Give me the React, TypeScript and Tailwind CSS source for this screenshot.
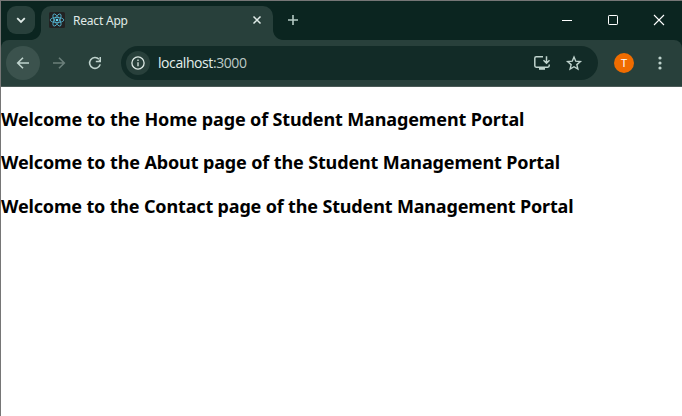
import type { ReactNode } from "react";

function Icon({ size = 16, box = "0 0 16 16", children, className = "" }: { size?: number; box?: string; children: ReactNode; className?: string }) {
  return (
    <svg width={size} height={size} viewBox={box} fill="none" stroke="currentColor" className={`shrink-0 ${className}`}>
      {children}
    </svg>
  );
}

function ReactLogo() {
  return (
    <svg width="16" height="16" viewBox="0 0 16 16" className="shrink-0">
      <rect width="16" height="16" rx="1.5" fill="#222222" />
      <g fill="none" stroke="#53b4cf" strokeWidth="0.85">
        <ellipse cx="8" cy="8" rx="6.8" ry="2.6" />
        <ellipse cx="8" cy="8" rx="6.8" ry="2.6" transform="rotate(60 8 8)" />
        <ellipse cx="8" cy="8" rx="6.8" ry="2.6" transform="rotate(120 8 8)" />
      </g>
      <circle cx="8" cy="8" r="1.3" fill="#61dafb" />
    </svg>
  );
}

function TabStrip() {
  return (
    <div className="flex h-[39px] w-full text-[#e0ebe8]">
      <div className="ml-1.5 mt-[5px] flex size-7 items-center justify-center rounded-[9px] bg-[#28403b]">
        <Icon><path d="M4.2 6.2 8 10l3.8-3.8" strokeWidth="1.8" /></Icon>
      </div>
      <div className="ml-[-4px] h-2.5 w-2.5 shrink-0 self-end bg-[radial-gradient(circle_at_0_0,transparent_9.5px,#28403b_10.3px)]" />
      <div className="mt-[5px] flex h-[34px] w-[232px] shrink-0 items-center rounded-t-[10px] bg-[#28403b] pb-[6px] pl-2">
        <ReactLogo />
        <span className="ml-2 mt-px whitespace-nowrap font-['Noto_Sans',sans-serif] text-[12px] leading-4 tracking-[-0.2px]">React App</span>
        <Icon className="ml-auto mr-2"><path d="m4.5 4.5 7 7M11.5 4.5l-7 7" strokeWidth="1.5" /></Icon>
      </div>
      <div className="h-2.5 w-2.5 shrink-0 self-end bg-[radial-gradient(circle_at_100%_0,transparent_9.5px,#28403b_10.3px)]" />
      <Icon className="ml-[2px] mt-[11px] text-[#b5cac4]"><path d="M8 3v10M3 8h10" strokeWidth="1.6" /></Icon>
      <div className="ml-auto flex h-[38px] text-white">
        <div className="flex w-[46px] items-center justify-center"><Icon><path d="M3 8.5h10" /></Icon></div>
        <div className="flex w-[46px] items-center justify-center"><Icon><rect x="3.5" y="3.5" width="9" height="9" rx="0.7" /></Icon></div>
        <div className="flex w-[46px] items-center justify-center"><Icon><path d="m3 3 10 10M13 3 3 13" strokeWidth="1.1" /></Icon></div>
      </div>
    </div>
  );
}

function Toolbar() {
  return (
    <div className="flex h-[47px] items-center rounded-t-[8px] border-b border-[#4b5a57] bg-[#28403b] pl-[5px] text-[#bfd3cd]">
      <div className="flex size-[34px] items-center justify-center rounded-full bg-[#3b524d]">
        <Icon><path d="M14 8H3M8 2.7 2.7 8 8 13.3" strokeWidth="1.6" /></Icon>
      </div>
      <Icon className="ml-[11px] text-[#6b7f7a]"><path d="M2 8h11M8 2.7 13.3 8 8 13.3" strokeWidth="1.6" /></Icon>
      <Icon className="ml-5">
        <path d="M13.2 9.4A5.4 5.4 0 1 1 12 4.3" strokeWidth="1.6" />
        <path d="M14 2v5.2H8.8V5.8h2.7l1-1V2z" fill="currentColor" stroke="none" />
      </Icon>
      <div className="ml-[18px] flex h-[34px] w-[477px] shrink-0 items-center rounded-full bg-[#122b27] pl-[5px] pr-[15px]">
        <div className="flex size-6 items-center justify-center rounded-full bg-[#28403b] text-[#dce8e4]">
          <Icon>
            <circle cx="8" cy="8" r="6.1" strokeWidth="1.3" />
            <path d="M8 7.2v4M8 4.6v1.5" strokeWidth="1.3" />
          </Icon>
        </div>
        <span className="ml-2 whitespace-nowrap font-['Open_Sans',sans-serif] text-[14px] leading-5 tracking-[-0.42px] text-[#e3efeb]">
          localhost<span className="text-[#bdc9c5]">:3000</span>
        </span>
        <Icon size={18} box="0 0 18 18" className="ml-auto">
          <path d="M10 2.8H3.2Q1.8 2.8 1.8 4.2v7.6Q1.8 13.2 3.2 13.2h11.6q1.4 0 1.4-1.4V10.5M13.5 2.2v6.6M10.5 6.2l3 3 3-3" strokeWidth="1.5" />
          <path d="M6 13.5h6v2.3H6z" fill="currentColor" stroke="none" />
        </Icon>
        <Icon size={18} box="0 0 18 18" className="ml-[14px]">
          <path d="m9 3 1.75 4.2 4.6.4-3.5 3 1.05 4.5L9 12.7l-3.9 2.4 1.05-4.5-3.5-3 4.6-.4z" strokeWidth="1.4" />
        </Icon>
      </div>
      <div className="ml-4 flex size-5 shrink-0 items-center justify-center rounded-full bg-[#f06c00] font-['Roboto',sans-serif] text-[11px] leading-none text-white">T</div>
      <Icon className="ml-[18px]">
        <g fill="currentColor" stroke="none"><circle cx="8" cy="3" r="1.6" /><circle cx="8" cy="8" r="1.6" /><circle cx="8" cy="13" r="1.6" /></g>
      </Icon>
    </div>
  );
}

export default function App() {
  return (
    <div className="h-[416px] w-[682px] overflow-hidden border-l border-t border-[#767676] bg-white">
      <div className="bg-[#0b2520]">
        <TabStrip />
        <Toolbar />
      </div>
      <main className="flex flex-col whitespace-nowrap pt-5 font-['Noto_Sans',sans-serif] text-[18px] font-bold leading-[25px] text-black">
        <h3 className="mb-[18px] tracking-[-0.13px]">Welcome to the Home page of Student Management Portal</h3>
        <h3 className="mb-[19px] tracking-[-0.13px]">Welcome to the About page of the Student Management Portal</h3>
        <h3 className="tracking-[-0.16px]">Welcome to the Contact page of the Student Management Portal</h3>
      </main>
    </div>
  );
}
